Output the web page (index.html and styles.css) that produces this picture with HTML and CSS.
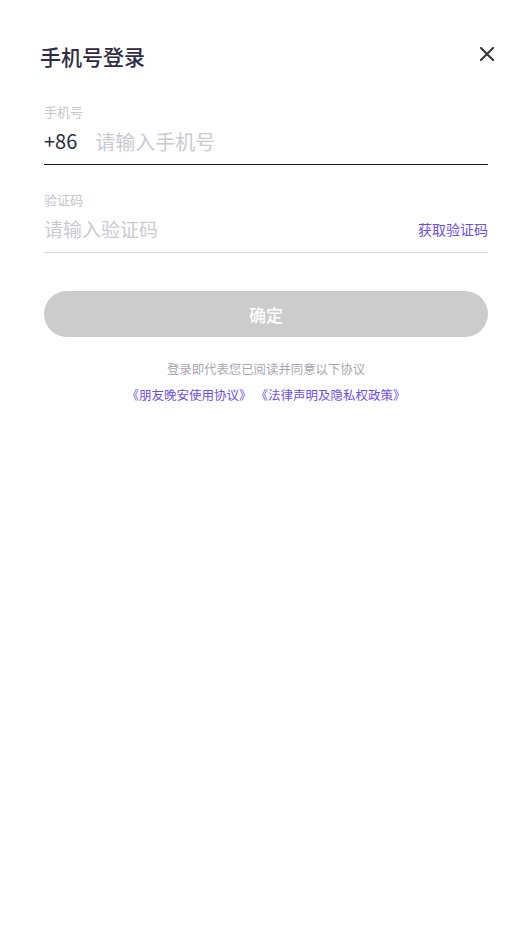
FILE: index.html
```html
<!DOCTYPE html>
<html lang="zh-CN">
<head>
    <meta charset="UTF-8">
    <meta name="viewport" content="width=device-width, initial-scale=1.0">
    <title>手机号登录</title>
    <link rel="stylesheet" href="styles.css">
</head>
<body>
    <div class="header">
        <div class="title">手机号登录</div>
        <svg class="close" width="14" height="14" viewBox="0 0 14 14">
            <path d="M1 1L13 13M13 1L1 13" stroke="#333" stroke-width="2" stroke-linecap="square" fill="none"/>
        </svg>
    </div>
    <div class="form">
        <div class="label">手机号</div>
        <div class="field field-active">
            <span class="prefix">+86</span>
            <input class="input" type="tel" placeholder="请输入手机号">
        </div>
        <div class="label label-code">验证码</div>
        <div class="field">
            <input class="input input-code" type="text" placeholder="请输入验证码">
            <span class="get-code">获取验证码</span>
        </div>
        <button class="submit">确定</button>
        <div class="agree">登录即代表您已阅读并同意以下协议</div>
        <div class="links"><span>《朋友晚安使用协议》</span><span>《法律声明及隐私权政策》</span></div>
    </div>
</body>
</html>
```

FILE: styles.css
```css
body {
    margin: 0;
    background: #fff;
    font-family: "Noto Sans CJK SC", "Noto Sans", sans-serif;
    color: #2d2b45;
}
.header {
    display: flex;
    justify-content: space-between;
    align-items: flex-start;
    padding: 42px 38px 0 40px;
}
.title {
    font-size: 21px;
    line-height: 28px;
    font-weight: 500;
    color: #2d2b45;
}
.close {
    margin-top: 5px;
    cursor: pointer;
}
.form {
    padding: 0 44px;
}
.label {
    margin-top: 33px;
    font-size: 13px;
    line-height: 18px;
    color: #c6c5cf;
}
.label-code {
    margin-top: 26px;
}
.field {
    display: flex;
    align-items: center;
    margin-top: 6px;
    padding-bottom: 9px;
    border-bottom: 1px solid #d8d7df;
}
.field-active {
    border-bottom-color: #1a1a1a;
}
.prefix {
    font-size: 20px;
    line-height: 28px;
    margin-right: 18px;
    color: #2d2b45;
}
.input {
    flex: 1;
    min-width: 0;
    border: none;
    outline: none;
    padding: 0;
    margin: 0;
    height: 28px;
    font-family: inherit;
    font-size: 20px;
    color: #2d2b45;
    background: transparent;
}
.input::placeholder {
    color: #cbcad3;
}
.input-code {
    font-size: 19px;
    margin-top: -2px;
}
.get-code {
    font-size: 14px;
    line-height: 28px;
    color: #6b4ef2;
    cursor: pointer;
}
.submit {
    display: block;
    width: 100%;
    height: 46px;
    margin-top: 38px;
    border: none;
    border-radius: 23px;
    background: #cccccc;
    color: #fff;
    font-family: inherit;
    font-size: 17px;
    font-weight: 500;
}
.agree {
    margin-top: 23px;
    text-align: center;
    font-size: 12.4px;
    line-height: 18px;
    color: #a7a6b0;
}
.links {
    display: flex;
    justify-content: center;
    gap: 4px;
    margin-top: 8px;
    font-size: 12.5px;
    line-height: 18px;
    color: #6b4ef2;
}
```
